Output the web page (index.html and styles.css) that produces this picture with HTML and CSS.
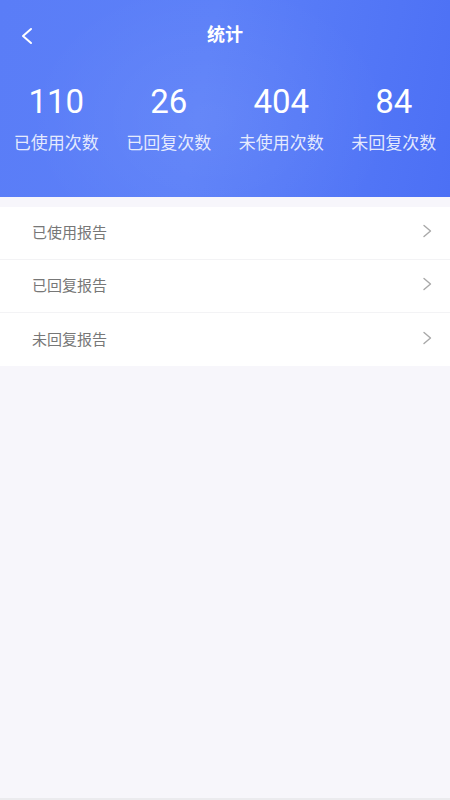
FILE: index.html
```html
<!DOCTYPE html>
<html lang="zh">
<head>
<meta charset="utf-8">
<meta name="viewport" content="width=device-width, initial-scale=1">
<title>统计</title>
<link rel="stylesheet" href="styles.css">
</head>
<body>
<div class="page">
  <header class="header">
    <div class="nav">
      <span class="back">
        <svg width="14" height="18" viewBox="0 0 14 18"><polyline points="11,2 3,9 11,16" fill="none" stroke="#ffffff" stroke-width="2" stroke-linecap="round" stroke-linejoin="round"/></svg>
      </span>
      <h1 class="title">统计</h1>
    </div>
    <div class="stats">
      <div class="stat"><div class="num">110</div><div class="label">已使用次数</div></div>
      <div class="stat"><div class="num">26</div><div class="label">已回复次数</div></div>
      <div class="stat"><div class="num">404</div><div class="label">未使用次数</div></div>
      <div class="stat"><div class="num">84</div><div class="label">未回复次数</div></div>
    </div>
  </header>
  <ul class="list">
    <li class="row"><span class="row-text">已使用报告</span><svg class="arrow" width="10" height="14" viewBox="0 0 10 14"><polyline points="2,1.5 8.5,7 2,12.5" fill="none" stroke="#a8a8a8" stroke-width="1.4" stroke-linecap="round" stroke-linejoin="round"/></svg></li>
    <li class="row"><span class="row-text">已回复报告</span><svg class="arrow" width="10" height="14" viewBox="0 0 10 14"><polyline points="2,1.5 8.5,7 2,12.5" fill="none" stroke="#a8a8a8" stroke-width="1.4" stroke-linecap="round" stroke-linejoin="round"/></svg></li>
    <li class="row"><span class="row-text">未回复报告</span><svg class="arrow" width="10" height="14" viewBox="0 0 10 14"><polyline points="2,1.5 8.5,7 2,12.5" fill="none" stroke="#a8a8a8" stroke-width="1.4" stroke-linecap="round" stroke-linejoin="round"/></svg></li>
  </ul>
</div>
</body>
</html>
```
FILE: styles.css
```css
* { box-sizing: border-box; }
html, body {
  margin: 0;
  padding: 0;
  background: #f7f6fb;
  font-family: Roboto, "Noto Sans CJK SC", "Noto Sans", sans-serif;
}
.page {
  width: 450px;
  min-height: 800px;
  display: flex;
  flex-direction: column;
  border-bottom: 2px solid #ebebee;
}
.header {
  height: 197px;
  color: #ffffff;
  background:
    radial-gradient(ellipse 260px 200px at 210px 120px, rgba(255,255,255,0.06), rgba(255,255,255,0) 70%),
    linear-gradient(100deg, #5a7df7 0%, #5c80f8 45%, #4c70f5 100%);
  display: flex;
  flex-direction: column;
}
.nav {
  height: 70px;
  display: flex;
  align-items: center;
  justify-content: center;
  position: relative;
}
.back {
  position: absolute;
  left: 20px;
  top: 27px;
  display: flex;
}
.title {
  margin: 0;
  font-size: 18px;
  font-weight: 700;
  line-height: 24px;
}
.stats {
  display: grid;
  grid-template-columns: repeat(4, 1fr);
  padding-top: 12px;
}
.stat {
  display: flex;
  flex-direction: column;
  align-items: center;
}
.num {
  font-size: 33px;
  line-height: 40px;
  font-weight: 400;
}
.label {
  margin-top: 9px;
  font-size: 17px;
  line-height: 24px;
  color: rgba(255,255,255,0.85);
}
.list {
  list-style: none;
  margin: 10px 0 0;
  padding: 0;
  background: #ffffff;
}
.row {
  height: 53px;
  display: flex;
  align-items: center;
  justify-content: space-between;
  padding: 0 18px 0 32px;
  border-bottom: 1px solid #f3f3f5;
}
.row:last-child { border-bottom: none; }
.row-text {
  font-size: 15px;
  color: #777777;
  line-height: 20px;
}
.arrow {
  margin-top: -4px;
}
```
